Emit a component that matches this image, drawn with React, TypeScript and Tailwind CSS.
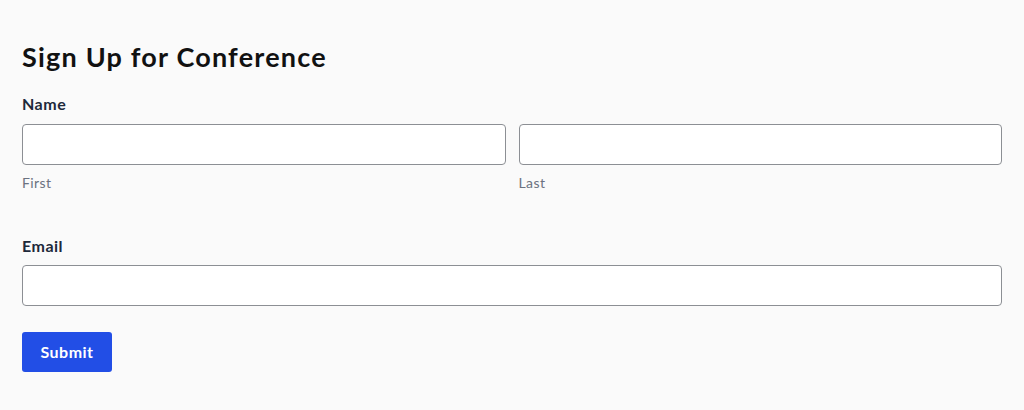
export default function App() {
  return (
    <div className="min-h-[410px] w-full bg-[#fafafa] px-[22px] pt-[40px] font-['Lato',sans-serif]">
      <h1 className="text-[27px] font-bold leading-[34px] tracking-[1.2px] text-[#111111]">Sign Up for Conference</h1>

      <form className="mt-[20px]" onSubmit={(e) => e.preventDefault()}>
        <div className="text-[16px] font-bold leading-[20px] tracking-[0.5px] text-[#1e293b]">Name</div>
        <div className="mt-[10px] grid grid-cols-2 gap-[13px]">
          <div>
            <input className="h-[41px] w-full rounded-[4px] border border-[#8c8f94] bg-white" />
            <div className="mt-[10px] text-[14px] leading-[16px] tracking-[0.4px] text-[#6b7280]">First</div>
          </div>
          <div>
            <input className="h-[41px] w-full rounded-[4px] border border-[#8c8f94] bg-white" />
            <div className="mt-[10px] text-[14px] leading-[16px] tracking-[0.4px] text-[#6b7280]">Last</div>
          </div>
        </div>

        <div className="mt-[45px] text-[16px] font-bold leading-[20px] tracking-[0.5px] text-[#1e293b]">Email</div>
        <input
          type="email"
          className="mt-[9px] block h-[41px] w-full rounded-[4px] border border-[#8c8f94] bg-white"
        />

        <button
          type="submit"
          className="mt-[26px] h-[40px] w-[90px] rounded-[3px] bg-[#224ee6] text-[16px] font-bold tracking-[0.5px] text-white"
        >
          Submit
        </button>
      </form>
    </div>
  );
}
